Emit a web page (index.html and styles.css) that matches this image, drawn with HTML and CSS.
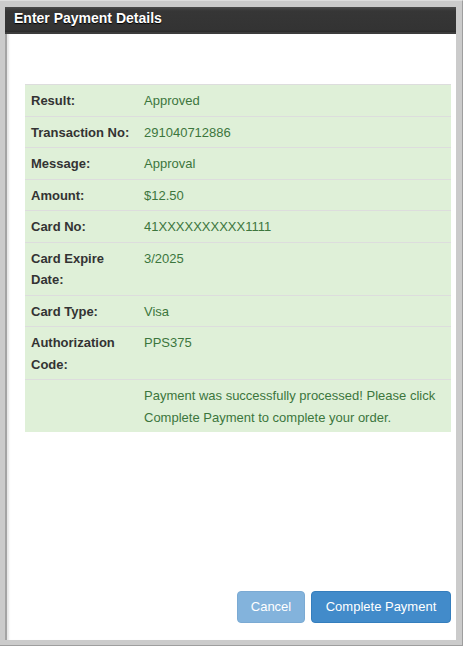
FILE: index.html
```html
<!DOCTYPE html>
<html>
<head>
<meta charset="utf-8">
<title>Enter Payment Details</title>
<link rel="stylesheet" href="styles.css">
</head>
<body>
<div class="frame">
  <div class="dialog">
    <div class="dialog-header">Enter Payment Details</div>
    <div class="dialog-body">
      <table class="result-table">
        <colgroup><col class="col-label"><col></colgroup>
        <tbody>
          <tr><td class="label">Result:</td><td class="value">Approved</td></tr>
          <tr><td class="label">Transaction No:</td><td class="value">291040712886</td></tr>
          <tr><td class="label">Message:</td><td class="value">Approval</td></tr>
          <tr><td class="label">Amount:</td><td class="value">$12.50</td></tr>
          <tr><td class="label">Card No:</td><td class="value">41XXXXXXXXXX1111</td></tr>
          <tr><td class="label">Card Expire Date:</td><td class="value">3/2025</td></tr>
          <tr><td class="label">Card Type:</td><td class="value">Visa</td></tr>
          <tr><td class="label">Authorization Code:</td><td class="value">PPS375</td></tr>
          <tr><td class="label"></td><td class="value">Payment was successfully processed! Please click Complete Payment to complete your order.</td></tr>
        </tbody>
      </table>
      <div class="dialog-footer">
        <button class="btn btn-cancel" type="button">Cancel</button>
        <button class="btn btn-complete" type="button">Complete Payment</button>
      </div>
    </div>
  </div>
</div>
</body>
</html>
```

FILE: styles.css
```css
html, body {
  margin: 0;
  padding: 0;
  background: #cbcbcb;
}

.frame {
  box-sizing: border-box;
  width: 463px;
  height: 646px;
  padding: 6px 6px 5px 5px;
  border-top: 1px solid #dedede;
  border-right: 1px solid #9e9e9e;
  border-bottom: 1px solid #9e9e9e;
}

.dialog {
  box-sizing: border-box;
  width: 451px;
  height: 633px;
  background: #ffffff;
  display: flex;
  flex-direction: column;
  font-family: "Liberation Sans", Arial, sans-serif;
  font-size: 13px;
}

.dialog-header {
  box-sizing: border-box;
  height: 27px;
  padding: 3px 0 0 9px;
  line-height: 17px;
  font-weight: bold;
  font-size: 14px;
  color: #ffffff;
  text-shadow: 0 1px 1px #000000;
  background: linear-gradient(#4c4c4c, #363636 4px, #333333 23px, #2a2a2a);
  border-bottom: 2px solid #3c3c3c;
}

.dialog-body {
  flex: 1;
  display: flex;
  flex-direction: column;
  padding: 50px 5px 17px 18px;
  border-left: 2px solid #a4a4a4;
  box-shadow: inset 3px 0 2px -1px rgba(0, 0, 0, 0.10);
}

.result-table {
  width: 100%;
  border-collapse: collapse;
  table-layout: fixed;
  background: #dff0d8;
}

.col-label {
  width: 113px;
}

.result-table td {
  border-top: 1px solid #dddddd;
  padding: 5px 6px 4px 6px;
  line-height: 21.5px;
  vertical-align: top;
}

.label {
  font-weight: bold;
  color: #333333;
}

.value {
  color: #3c763d;
}

.dialog-footer {
  margin-top: auto;
  display: flex;
  justify-content: flex-end;
  gap: 6px;
}

.btn {
  box-sizing: border-box;
  height: 32px;
  padding: 0;
  border: 1px solid #357ebd;
  border-radius: 4px;
  background: #428bca;
  color: #ffffff;
  font-family: "Liberation Sans", Arial, sans-serif;
  font-size: 13px;
  line-height: 30px;
  text-align: center;
}

.btn-cancel {
  width: 68px;
  opacity: 0.65;
}

.btn-complete {
  width: 140px;
}
```
